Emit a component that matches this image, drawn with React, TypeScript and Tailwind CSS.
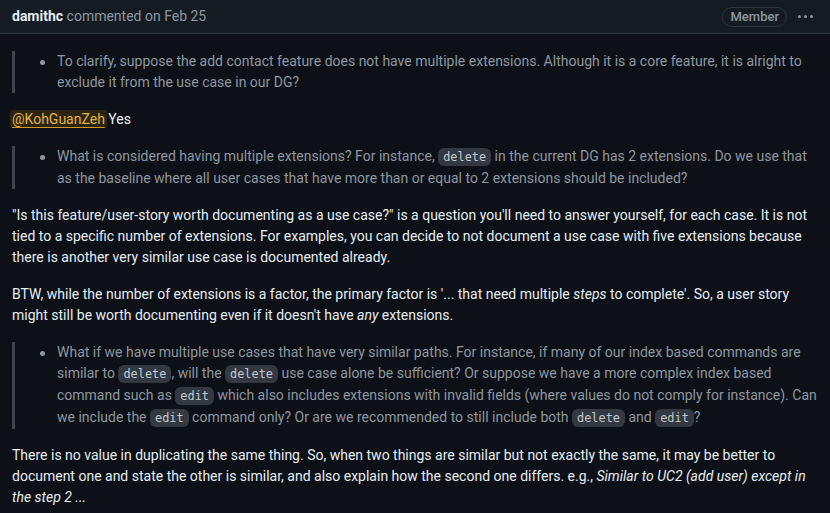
import React from "react";

const Code = ({ children }: { children: React.ReactNode }) => (
  <code className="rounded-md bg-[#343941] px-[5px] py-[2px] font-['DejaVu_Sans_Mono',monospace] text-[11.9px] text-[#c3cad2]">
    {children}
  </code>
);

const Quote = ({ children }: { children: React.ReactNode }) => (
  <div className="mb-4 border-l-[3px] border-[#3d444d] pl-[25px] text-[#8d96a0]">
    <div className="flex">
      <span className="flex h-[21px] w-[17px] shrink-0 items-center">
        <span className="mt-[1px] h-[5px] w-[5px] rounded-full bg-[#8d96a0]" />
      </span>
      <div className="whitespace-nowrap">{children}</div>
    </div>
  </div>
);

export default function App() {
  return (
    <div className="h-[513px] w-[830px] overflow-hidden bg-[#0d1117] font-['Roboto',sans-serif] text-[14px] leading-[21px] text-[#e6edf3]">
      <div className="flex h-[34px] items-center border-b border-[#30363d] bg-[#151b23] pl-3 pr-[17px]">
        <div className="flex-1 whitespace-nowrap">
          <span className="font-bold text-[#e6edf3]">damithc</span>{" "}
          <span className="text-[#8d96a0]">commented on Feb 25</span>
        </div>
        <span className="flex h-[20px] items-center rounded-full border border-[#30363d] px-[7px] text-[13px] font-medium text-[#8d96a0]">
          Member
        </span>
        <span className="ml-[11px] flex items-center gap-[3px]">
          <span className="h-[3px] w-[3px] rounded-full bg-[#8d96a0]" />
          <span className="h-[3px] w-[3px] rounded-full bg-[#8d96a0]" />
          <span className="h-[3px] w-[3px] rounded-full bg-[#8d96a0]" />
        </span>
      </div>
      <div className="px-3 pt-[17px]">
        <Quote>
          To clarify, suppose the add contact feature does not have multiple extensions. Although it is a core feature, it is alright to
          <br />
          exclude it from the use case in our DG?
        </Quote>
        <p className="mb-4 whitespace-nowrap">
          <span className="-mx-[2px] rounded-[3px] bg-[#2b2414] px-[2px] py-[1px] text-[#e3b341] underline decoration-[#d29922] underline-offset-[3px]">
            @KohGuanZeh
          </span>{" "}
          Yes
        </p>
        <Quote>
          What is considered having multiple extensions? For instance, <Code>delete</Code> in the current DG has 2 extensions. Do we use that
          <br />
          as the baseline where all user cases that have more than or equal to 2 extensions should be included?
        </Quote>
        <p className="mb-4 whitespace-nowrap">
          "Is this feature/user-story worth documenting as a use case?" is a question you'll need to answer yourself, for each case. It is not
          <br />
          tied to a specific number of extensions. For examples, you can decide to not document a use case with five extensions because
          <br />
          there is another very similar use case is documented already.
        </p>
        <p className="mb-4 whitespace-nowrap">
          BTW, while the number of extensions is a factor, the primary factor is '... that need multiple <em>steps</em> to complete'. So, a user story
          <br />
          might still be worth documenting even if it doesn't have <em>any</em> extensions.
        </p>
        <Quote>
          What if we have multiple use cases that have very similar paths. For instance, if many of our index based commands are
          <br />
          similar to <Code>delete</Code>, will the <Code>delete</Code> use case alone be sufficient? Or suppose we have a more complex index based
          <br />
          command such as <Code>edit</Code> which also includes extensions with invalid fields (where values do not comply for instance). Can
          <br />
          we include the <Code>edit</Code> command only? Or are we recommended to still include both <Code>delete</Code> and <Code>edit</Code>?
        </Quote>
        <p className="mb-4 whitespace-nowrap">
          There is no value in duplicating the same thing. So, when two things are similar but not exactly the same, it may be better to
          <br />
          document one and state the other is similar, and also explain how the second one differs. e.g., <em>Similar to UC2 (add user) except in</em>
          <br />
          <em>the step 2 ...</em>
        </p>
      </div>
    </div>
  );
}
